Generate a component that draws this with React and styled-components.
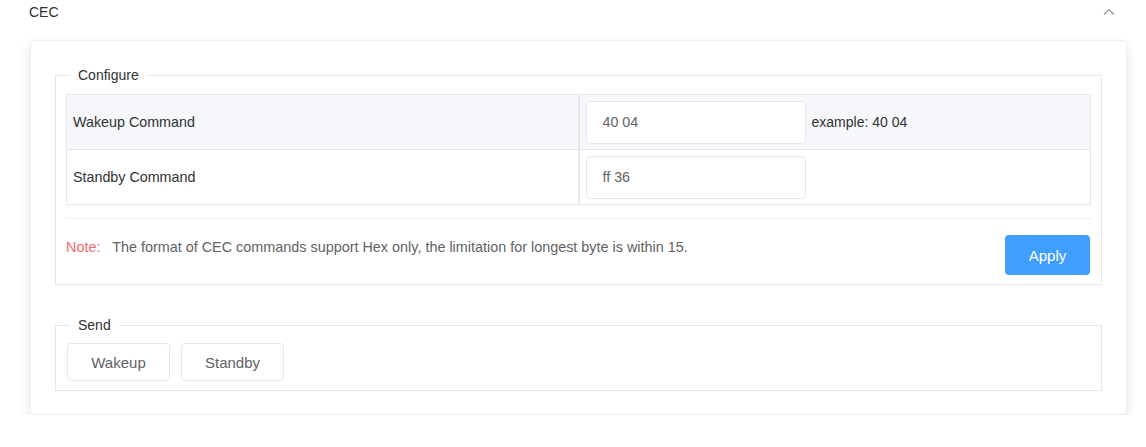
import React from "react";
import styled, { createGlobalStyle } from "styled-components";

const Global = createGlobalStyle`
  html, body { margin: 0; padding: 0; background: #fff; }
  body { font-family: "Liberation Sans", Arial, sans-serif; color: #303133; }
  * { box-sizing: border-box; }
`;

const Header = styled.div`
  display: flex;
  align-items: center;
  justify-content: space-between;
  height: 24px;
  padding: 0 31px 0 29px;
  font-size: 14px;
  color: #303133;
`;

const Card = styled.div`
  margin: 16px 19px 0 30px;
  border: 1px solid #ebeef5;
  border-radius: 4px;
  background: #fff;
  box-shadow: 0 5px 12px 0 rgba(0, 0, 0, 0.1);
  padding: 25px 24px 23px 24px;
`;

const Fieldset = styled.fieldset`
  margin: ${(p) => (p.$first ? "0" : "31px 0 0 0")};
  border: 1px solid #e4e7ed;
  padding: 0 10px 9px 10px;
  min-width: 0;
`;

const Legend = styled.legend`
  margin-left: 4px;
  padding: 0 8px;
  font-size: 14px;
  line-height: 18px;
  color: #303133;
`;

const Table = styled.table`
  width: 100%;
  border-collapse: collapse;
  margin-top: 10px;
  font-size: 14.3px;
`;

const Row = styled.tr`
  height: 55px;
  background: ${(p) => (p.$striped ? "#f5f7fa" : "#fff")};
`;

const LabelCell = styled.td`
  width: 50%;
  border: 1px solid #e4e7ed;
  border-right-width: 2px;
  padding: 0 6px;
  color: #303133;
`;

const ValueCell = styled.td`
  border: 1px solid #e4e7ed;
  padding: 0 6px;
`;

const ValueWrap = styled.div`
  display: flex;
  align-items: center;
  gap: 6px;
`;

const Input = styled.input`
  width: 220px;
  height: 43px;
  border: 1px solid #e4e7ed;
  border-radius: 4px;
  padding: 0 16px;
  font-family: inherit;
  font-size: 14.3px;
  color: #606266;
  background: #fff;
  outline: none;
`;

const Hint = styled.span`
  font-size: 14px;
  color: #303133;
`;

const Divider = styled.div`
  height: 1px;
  background: #ebeef5;
  margin-top: 13px;
`;

const NoteRow = styled.div`
  display: flex;
  justify-content: space-between;
  align-items: flex-start;
  padding-top: 16px;
`;

const Note = styled.div`
  padding-top: 3px;
  font-size: 14.4px;
  line-height: 18px;
  color: #606266;
  white-space: pre;
`;

const NoteLabel = styled.span`
  color: #f56c6c;
`;

const PrimaryButton = styled.button`
  width: 85px;
  height: 40px;
  margin-right: 1px;
  border: none;
  border-radius: 4px;
  background: #409eff;
  color: #fff;
  font-family: inherit;
  font-size: 15px;
`;

const ButtonRow = styled.div`
  display: flex;
  gap: 11px;
  padding: 9px 0 0 1px;
`;

const Button = styled.button`
  width: 103px;
  height: 38px;
  border: 1px solid #e4e7ed;
  border-radius: 4px;
  background: #fff;
  color: #606266;
  font-family: inherit;
  font-size: 15px;
`;

const Chevron = () => (
  <svg width="12" height="8" viewBox="0 0 12 8" fill="none">
    <polyline points="1,6.5 6,1.5 11,6.5" stroke="#909399" strokeWidth="1.2" />
  </svg>
);

export default function App() {
  return (
    <>
      <Global />
      <Header>
        <span>CEC</span>
        <Chevron />
      </Header>
      <Card>
        <Fieldset $first>
          <Legend>Configure</Legend>
          <Table>
            <tbody>
              <Row $striped>
                <LabelCell>Wakeup Command</LabelCell>
                <ValueCell>
                  <ValueWrap>
                    <Input defaultValue="40 04" />
                    <Hint>example: 40 04</Hint>
                  </ValueWrap>
                </ValueCell>
              </Row>
              <Row>
                <LabelCell>Standby Command</LabelCell>
                <ValueCell>
                  <ValueWrap>
                    <Input defaultValue="ff 36" />
                  </ValueWrap>
                </ValueCell>
              </Row>
            </tbody>
          </Table>
          <Divider />
          <NoteRow>
            <Note>
              <NoteLabel>Note:</NoteLabel>
              {"   The format of CEC commands support Hex only, the limitation for longest byte is within 15."}
            </Note>
            <PrimaryButton>Apply</PrimaryButton>
          </NoteRow>
        </Fieldset>
        <Fieldset>
          <Legend>Send</Legend>
          <ButtonRow>
            <Button>Wakeup</Button>
            <Button>Standby</Button>
          </ButtonRow>
        </Fieldset>
      </Card>
    </>
  );
}
